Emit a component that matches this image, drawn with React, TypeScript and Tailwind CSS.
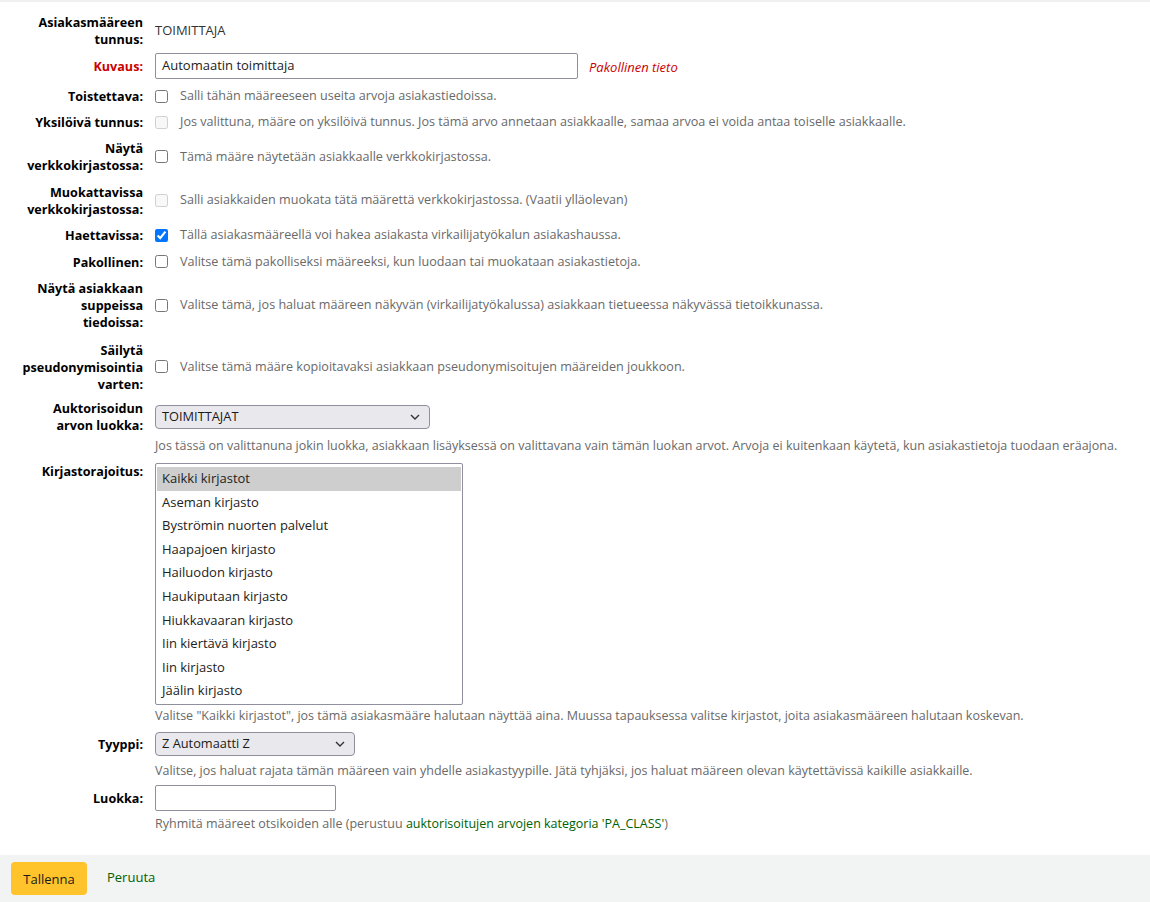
import React from 'react';

const FONT = { fontFamily: '"Open Sans", "Noto Sans", sans-serif' };

const libraries = [
  'Kaikki kirjastot',
  'Aseman kirjasto',
  'Byströmin nuorten palvelut',
  'Haapajoen kirjasto',
  'Hailuodon kirjasto',
  'Haukiputaan kirjasto',
  'Hiukkavaaran kirjasto',
  'Iin kiertävä kirjasto',
  'Iin kirjasto',
  'Jäälin kirjasto',
];

const Label = ({ children, red }: { children: React.ReactNode; red?: boolean }) => (
  <div
    className={`w-[143px] shrink-0 text-right text-[12.6px] font-bold leading-[17px] ${
      red ? 'text-[#cc0000]' : 'text-black'
    }`}
  >
    {children}
  </div>
);

const CheckRow = ({
  label,
  text,
  h,
  checked,
  disabled,
}: {
  label: React.ReactNode;
  text: string;
  h: string;
  checked?: boolean;
  disabled?: boolean;
}) => (
  <div className={`flex items-center gap-[12px] ${h}`}>
    <Label>{label}</Label>
    <div className="flex items-center gap-[12px]">
      <input
        type="checkbox"
        defaultChecked={checked}
        disabled={disabled}
        className="w-[13px] h-[13px] m-0"
      />
      <span className="text-[12.6px] text-[#696969] whitespace-nowrap">{text}</span>
    </div>
  </div>
);

const Chevron = () => (
  <svg width="10" height="6" viewBox="0 0 10 6" className="shrink-0">
    <polyline points="1,1 5,5 9,1" fill="none" stroke="#333" strokeWidth="1.4" />
  </svg>
);

const FakeSelect = ({ value, w }: { value: string; w: string }) => (
  <div
    className={`${w} h-[24px] flex items-center justify-between pl-[6px] pr-[9px] rounded-[4px] border border-[#8f8f9d] bg-[#e9e9ed] text-[12.8px] text-[#1a1a1a]`}
  >
    <span>{value}</span>
    <Chevron />
  </div>
);

const Help = ({ children, h }: { children: React.ReactNode; h: string }) => (
  <div className={`flex items-center pl-[155px] ${h} text-[12.5px] text-[#696969] whitespace-nowrap`}>{children}</div>
);

export default function App() {
  return (
    <div className="w-[1150px] h-[902px] bg-white flex flex-col border-t-2 border-[#f0f0f0]" style={FONT}>
      <div className="flex-1 pt-[11px]">
        {/* Tunnus */}
        <div className="flex items-center gap-[12px] h-[36px]">
          <Label>
            Asiakasmääreen
            <br />
            tunnus:
          </Label>
          <span className="text-[13px] text-[#333]">TOIMITTAJA</span>
        </div>

        {/* Kuvaus */}
        <div className="flex items-center gap-[12px] h-[34px]">
          <Label red>Kuvaus:</Label>
          <div className="w-[423px] h-[26px] flex items-center px-[6px] border border-[#8f8f9d] rounded-[2px] text-[13px] text-[#222]">
            Automaatin toimittaja
          </div>
          <span className="ml-[-1px] mt-[3px] text-[13px] italic text-[#cc0000]">Pakollinen tieto</span>
        </div>

        <CheckRow h="h-[27px]" label="Toistettava:" text="Salli tähän määreeseen useita arvoja asiakastiedoissa." />
        <CheckRow
          h="h-[25px]"
          disabled
          label="Yksilöivä tunnus:"
          text="Jos valittuna, määre on yksilöivä tunnus. Jos tämä arvo annetaan asiakkaalle, samaa arvoa ei voida antaa toiselle asiakkaalle."
        />
        <CheckRow
          h="h-[44px]"
          label={
            <>
              Näytä
              <br />
              verkkokirjastossa:
            </>
          }
          text="Tämä määre näytetään asiakkaalle verkkokirjastossa."
        />
        <CheckRow
          h="h-[43px]"
          disabled
          label={
            <>
              Muokattavissa
              <br />
              verkkokirjastossa:
            </>
          }
          text="Salli asiakkaiden muokata tätä määrettä verkkokirjastossa. (Vaatii ylläolevan)"
        />
        <CheckRow
          h="h-[27px]"
          checked
          label="Haettavissa:"
          text="Tällä asiakasmääreellä voi hakea asiakasta virkailijatyökalun asiakashaussa."
        />
        <CheckRow
          h="h-[26px]"
          label="Pakollinen:"
          text="Valitse tämä pakolliseksi määreeksi, kun luodaan tai muokataan asiakastietoja."
        />
        <CheckRow
          h="h-[61px]"
          label={
            <>
              Näytä asiakkaan
              <br />
              suppeissa
              <br />
              tiedoissa:
            </>
          }
          text="Valitse tämä, jos haluat määreen näkyvän (virkailijatyökalussa) asiakkaan tietueessa näkyvässä tietoikkunassa."
        />
        <CheckRow
          h="h-[62px]"
          label={
            <>
              Säilytä
              <br />
              pseudonymisointia
              <br />
              varten:
            </>
          }
          text="Valitse tämä määre kopioitavaksi asiakkaan pseudonymisoitujen määreiden joukkoon."
        />

        {/* Auktorisoidun arvon luokka */}
        <div className="flex items-center gap-[12px] h-[38px]">
          <Label>
            Auktorisoidun
            <br />
            arvon luokka:
          </Label>
          <FakeSelect value="TOIMITTAJAT" w="w-[275px]" />
        </div>
        <Help h="h-[20px]">
          Jos tässä on valittanuna jokin luokka, asiakkaan lisäyksessä on valittavana vain tämän luokan arvot. Arvoja ei
          kuitenkaan käytetä, kun asiakastietoja tuodaan eräajona.
        </Help>

        {/* Kirjastorajoitus */}
        <div className="flex items-start gap-[12px] pt-[7px]">
          <Label>Kirjastorajoitus:</Label>
          <div className="w-[308px] h-[242px] border border-[#8f8f9d] rounded-[2px] p-[1px] pt-[3px] overflow-hidden">
            {libraries.map((lib, i) => (
              <div
                key={lib}
                className={`h-[23.6px] flex items-center pl-[5px] text-[13px] text-[#222] ${
                  i === 0 ? 'bg-[#cecece]' : ''
                }`}
              >
                {lib}
              </div>
            ))}
          </div>
        </div>
        <Help h="h-[22px]">
          Valitse "Kaikki kirjastot", jos tämä asiakasmääre halutaan näyttää aina. Muussa tapauksessa valitse kirjastot,
          joita asiakasmääreen halutaan koskevan.
        </Help>

        {/* Tyyppi */}
        <div className="flex items-center gap-[12px] h-[34px]">
          <Label>Tyyppi:</Label>
          <FakeSelect value="Z Automaatti Z" w="w-[200px]" />
        </div>
        <Help h="h-[20px]">
          Valitse, jos haluat rajata tämän määreen vain yhdelle asiakastyypille. Jätä tyhjäksi, jos haluat määreen olevan
          käytettävissä kaikille asiakkaille.
        </Help>

        {/* Luokka */}
        <div className="flex items-center gap-[12px] h-[34px]">
          <Label>Luokka:</Label>
          <div className="w-[181px] h-[26px] border border-[#8f8f9d] rounded-[2px]" />
        </div>
        <Help h="h-[18px]">
          <span>
            Ryhmitä määreet otsikoiden alle (perustuu{' '}
            <span className="text-[#006100]">auktorisoitujen arvojen kategoria 'PA_CLASS'</span>)
          </span>
        </Help>
      </div>

      {/* Footer */}
      <div className="h-[47px] bg-[#f2f3f3] flex items-center gap-[20px] pl-[11px]">
        <button className="w-[76px] h-[33px] rounded-[4px] bg-[#ffc32b] text-[13px] text-[#1a1a1a] pt-[3px]">
          Tallenna
        </button>
        <span className="text-[13px] text-[#006100] -mt-[2px]">Peruuta</span>
      </div>
    </div>
  );
}
